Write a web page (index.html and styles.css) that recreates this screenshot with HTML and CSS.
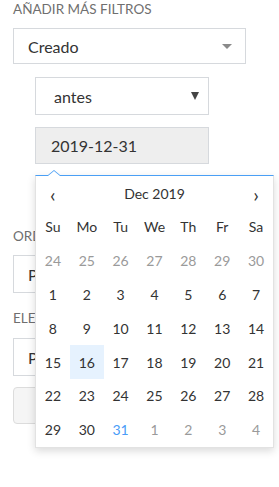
FILE: index.html
```html
<!DOCTYPE html>
<html>
<head>
  <meta charset="UTF-8">
  <title>Filtros</title>
  <link rel="stylesheet" href="styles.css">
</head>
<body>
  <div class="filters">
    <h3 class="section-title">Añadir más filtros</h3>
    <div class="select select-main">
      <span>Creado</span>
      <span class="caret caret-light"></span>
    </div>

    <div class="sub-filter">
      <div class="select select-small">
        <span>antes</span>
        <span class="caret caret-dark"></span>
      </div>
      <div class="date-field">
        <div class="date-input">2019-12-31</div>

        <div class="datepicker">
          <div class="dp-head">
            <span class="dp-nav">&lsaquo;</span>
            <span class="dp-title">Dec 2019</span>
            <span class="dp-nav">&rsaquo;</span>
          </div>
          <div class="dp-grid" id="grid"></div>
        </div>
      </div>
    </div>

    <h3 class="section-title label-order">Ordenar por</h3>
    <div class="select select-main select-tall">
      <span>Por defecto</span>
    </div>
    <h3 class="section-title label-items">Elementos por página</h3>
    <div class="select select-main select-tall select-gap">
      <span>Por página</span>
    </div>
    <button class="apply-btn">Aplicar</button>
  </div>

  <script>
    // días de diciembre 2019, con relleno del mes anterior y siguiente
    const names = ["Su", "Mo", "Tu", "We", "Th", "Fr", "Sa"];
    const grid = document.getElementById("grid");
    names.forEach(n => {
      const el = document.createElement("span");
      el.className = "dp-day-name";
      el.textContent = n;
      grid.appendChild(el);
    });
    const cells = [];
    for (let d = 24; d <= 30; d++) cells.push({ n: d, cls: "muted" });
    for (let d = 1; d <= 31; d++) cells.push({ n: d, cls: d === 16 ? "today" : d === 31 ? "selected" : "" });
    for (let d = 1; d <= 4; d++) cells.push({ n: d, cls: "muted" });
    cells.forEach(c => {
      const el = document.createElement("span");
      el.className = "dp-day " + c.cls;
      el.textContent = c.n;
      grid.appendChild(el);
    });
  </script>
</body>
</html>
```

FILE: styles.css
```css
html, body {
  height: 100%;
}
body {
  margin: 0;
  min-height: 487px;
  font-family: Lato, "Open Sans", sans-serif;
  color: #333;
  background-color: #fff;
}
.filters {
  padding: 1px 13px 40px 13px;
  width: 233px;
}
.section-title {
  margin: 0;
  font-size: 13.5px;
  line-height: 16px;
  font-weight: normal;
  text-transform: uppercase;
  color: #6f6f6f;
  white-space: nowrap;
}
.select {
  display: flex;
  align-items: center;
  justify-content: space-between;
  box-sizing: border-box;
  border: 1px solid #d6d9dd;
  background-color: #fff;
  font-size: 16px;
  color: #333;
}
.select-main {
  margin-top: 11px;
  height: 36px;
  padding: 0 13px 0 14px;
}
.select-tall {
  height: 38px;
}
.select-gap {
  margin-top: 12px;
}
.sub-filter {
  margin-left: 22px;
  width: 174px;
}
.select-small {
  margin-top: 13px;
  height: 38px;
  padding: 0 9px 0 18px;
}
.caret {
  width: 0;
  height: 0;
  border-left: 5px solid transparent;
  border-right: 5px solid transparent;
}
.caret-light {
  border-top: 5px solid #8a8a8a;
}
.caret-dark {
  border-left-width: 4px;
  border-right-width: 4px;
  border-top: 8px solid #444;
}
.date-field {
  position: relative;
  margin-top: 12px;
}
.date-input {
  box-sizing: border-box;
  height: 37px;
  padding: 0 15px;
  line-height: 35px;
  border: 1px solid #d6d9dd;
  background-color: #eee;
  font-size: 16px;
  color: #333;
}
.datepicker {
  position: absolute;
  top: calc(100% + 11px);
  left: 0;
  z-index: 5;
  width: 239px;
  box-sizing: border-box;
  background-color: #fff;
  border: 1px solid #e2e2e2;
  border-top: 1px solid #4a9ff5;
  box-shadow: 0 3px 8px rgba(0, 0, 0, 0.15);
  font-size: 14px;
}
.datepicker::before,
.datepicker::after {
  content: "";
  position: absolute;
  left: 12px;
  width: 0;
  height: 0;
  border-left: 6px solid transparent;
  border-right: 6px solid transparent;
}
.datepicker::before {
  top: -6px;
  border-bottom: 5px solid #4a9ff5;
}
.datepicker::after {
  top: -5px;
  border-bottom: 5px solid #fff;
}
.dp-head {
  display: grid;
  grid-template-columns: repeat(7, 1fr);
  height: 34px;
  align-items: center;
  text-align: center;
}
.dp-nav {
  font-size: 20px;
  line-height: 20px;
  padding-top: 2px;
  color: #333;
}
.dp-title {
  grid-column: span 5;
  color: #333;
}
.dp-grid {
  display: grid;
  grid-template-columns: repeat(7, 1fr);
  grid-template-rows: repeat(7, 33.8px);
}
.dp-day-name,
.dp-day {
  display: flex;
  align-items: center;
  justify-content: center;
  color: #333;
}
.dp-day.muted {
  color: #9a9a9a;
}
.dp-day.today {
  background-color: #e6f2fe;
}
.dp-day.selected {
  color: #4a9cf7;
}
.label-order {
  margin-top: 64px;
}
.label-items {
  margin-top: 17px;
}
.apply-btn {
  display: block;
  margin-top: 11px;
  width: 100%;
  height: 37px;
  border: 1px solid #dcdcdc;
  border-radius: 4px;
  background-color: #f5f5f5;
  font-family: inherit;
  font-size: 15px;
  color: #333;
}
```
